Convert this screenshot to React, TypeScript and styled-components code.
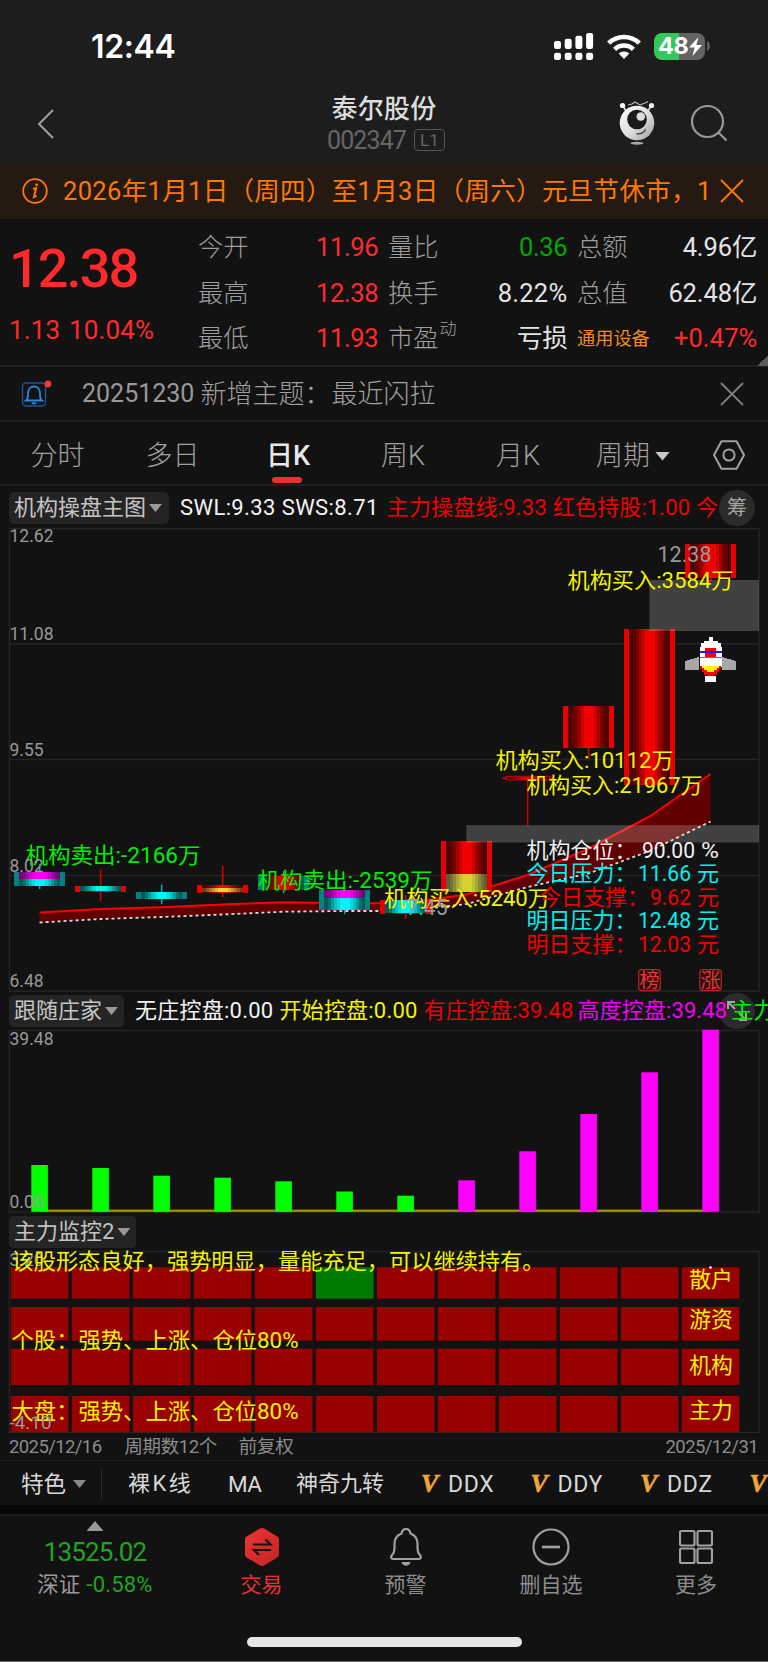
import React from "react";
import styled, { createGlobalStyle, css } from "styled-components";

const Global = createGlobalStyle`
  * { box-sizing: border-box; }
  body { margin: 0; background: #121212; }
  svg { display: block; flex: none; }
`;

const FONT = `Roboto, "Noto Sans CJK SC", sans-serif`;

const Screen = styled.div`
  width: 768px;
  height: 1662px;
  background: #121212;
  color: #999;
  font-family: ${FONT};
  overflow: hidden;
  display: flex;
  flex-direction: column;
  line-height: 1;
  border-bottom: 1px solid #6a6a6a;
`;

/* ---------- text ---------- */
type TextProps = { $size: number; $ls?: number; $color?: string; $weight?: number; $ml?: number };
const Text = styled.span<TextProps>`
  display: inline-block;
  white-space: nowrap;
  font-size: ${(p) => p.$size}px;
  letter-spacing: ${(p) => p.$ls ?? 0}px;
  color: ${(p) => p.$color ?? "#999"};
  font-weight: ${(p) => p.$weight ?? 400};
  margin-left: ${(p) => p.$ml ?? 0}px;
`;

/* ---------- top ---------- */
const TopArea = styled.header`
  height: 163px;
  flex: none;
  background: #1d1d1d;
`;
const StatusBar = styled.div`
  height: 92px;
  padding: 0 57px 0 91px;
  display: flex;
  align-items: center;
  justify-content: space-between;
`;
const Clock = styled.div`
  font: 600 32px/1 Inter, sans-serif;
  letter-spacing: -0.4px;
  padding-top: 1px;
  color: #fff;
`;
const StatusIcons = styled.div`
  display: flex;
  align-items: center;
`;
const Battery = styled.div`
  width: 51px;
  height: 27px;
  margin-left: 13px;
  border-radius: 8px;
  background: linear-gradient(90deg, #34c759 49%, #636363 49%);
  display: flex;
  align-items: center;
  padding-left: 4px;
  font: 700 23.5px/1 Inter, sans-serif;
  letter-spacing: -0.4px;
  color: #fff;
`;
const TitleBar = styled.div`
  height: 71px;
  display: grid;
  grid-template-columns: 200px 1fr 200px;
`;
const BackSlot = styled.div`
  padding: 17px 0 0 37px;
`;
const TitleStack = styled.div`
  display: flex;
  flex-direction: column;
  align-items: center;
  padding-top: 4px;
`;
const CodeRow = styled.div`
  display: flex;
  align-items: center;
  height: 24px;
  margin: 6px 0 0 4px;
`;
const LevelTag = styled.span`
  width: 31px;
  height: 22px;
  margin-left: 8px;
  border: 1.5px solid #555;
  border-radius: 4px;
  font-size: 17px;
  line-height: 20px;
  text-align: center;
  color: #666;
`;
const Actions = styled.div`
  display: flex;
  justify-content: flex-end;
  padding: 9px 39px 0 0;
  gap: 36px;
`;

const Notice = styled.div`
  height: 56px;
  flex: none;
  background: #241a11;
  display: flex;
  align-items: center;
  padding: 0 24px 1px 22px;
  justify-content: space-between;
`;
const NoticeText = styled.div`
  flex: 1;
  margin-left: 15px;
  font-size: 25.5px;
  letter-spacing: 0.33px;
  color: #ff7800;
  white-space: nowrap;
  overflow: hidden;
  line-height: 40px;
`;

/* ---------- quote ---------- */
const Quote = styled.section`
  position: relative;
  height: 148px;
  flex: none;
  border-bottom: 2px solid #1f1f1f;
  display: grid;
  grid-template-columns: 188px 190px 189px 190px;
  padding-right: 11px;
`;
const PriceCol = styled.div`
  padding: 23px 0 0 9px;
`;
const Price = styled.div`
  font-size: 54px;
  line-height: 54px;
  letter-spacing: -1.9px;
  font-weight: 500;
  color: #ff2a2a;
`;
const Change = styled.div`
  display: flex;
  gap: 9px;
  margin-top: 21px;
  font-size: 26px;
  letter-spacing: 0.1px;
  color: #ff2a2a;
`;
const StatCol = styled.div`
  padding: 6px 0 0 10px;
`;
const Stat = styled.div`
  height: 45.5px;
  display: flex;
  align-items: center;
  justify-content: space-between;
`;
const StatLabel = styled.span<{ $small?: boolean }>`
  font-size: ${(p) => (p.$small ? 18.2 : 25.3)}px;
  font-weight: ${(p) => (p.$small ? 400 : 300)};
  color: ${(p) => (p.$small ? "#f08a1c" : "#9e9e9e")};
  white-space: nowrap;
  sup {
    font-size: 17px;
    line-height: 0;
    vertical-align: 12px;
    margin-left: 1px;
  }
`;
const StatValue = styled.span<{ $c: string; $ls?: number }>`
  font-size: 25.5px;
  letter-spacing: ${(p) => p.$ls ?? -0.35}px;
  margin-right: -0.35px;
  color: ${(p) => p.$c};
`;
const Corner = styled.i`
  position: absolute;
  right: 0;
  bottom: -1px;
  width: 11px;
  height: 11px;
  background: linear-gradient(135deg, transparent 50%, #5a5a5a 50%);
`;

const ThemeRow = styled.div`
  height: 55px;
  flex: none;
  border-bottom: 2px solid #1f1f1f;
  display: flex;
  align-items: center;
  padding: 0 24px 0 21px;
`;
const Spacer = styled.i`
  flex: 1;
`;

/* ---------- tabs ---------- */
const Tabs = styled.nav`
  height: 64px;
  flex: none;
  border-bottom: 2px solid #1f1f1f;
  display: grid;
  grid-template-columns: 115px 115px 116px 114px 116px 114px 78px;
`;
const Tab = styled.div<{ $active?: boolean }>`
  display: flex;
  align-items: center;
  justify-content: center;
  position: relative;
  font-size: 27px;
  font-weight: ${(p) => (p.$active ? 500 : 300)};
  color: ${(p) => (p.$active ? "#e8e8e8" : "#a0a0a0")};
  padding-top: 6px;
  ${(p) =>
    p.$active &&
    css`
      &::after {
        content: "";
        position: absolute;
        left: 42px;
        bottom: 1px;
        width: 30px;
        height: 6px;
        border-radius: 3px;
        background: #ee2f2f;
      }
    `}
`;
const TabIcon = styled.div`
  display: flex;
  align-items: center;
  justify-content: center;
  padding-top: 3px;
`;
const Caret = styled.i<{ $w: number; $h: number; $c: string; $ml: number; $up?: boolean }>`
  flex: none;
  width: ${(p) => p.$w}px;
  height: ${(p) => p.$h}px;
  margin-left: ${(p) => p.$ml}px;
  background: ${(p) => p.$c};
  clip-path: ${(p) => (p.$up ? "polygon(50% 0, 100% 100%, 0 100%)" : "polygon(0 0, 100% 0, 50% 100%)")};
`;

/* ---------- indicator panels ---------- */
const IndicatorBar = styled.div<{ $h: number; $pt: number }>`
  position: relative;
  height: ${(p) => p.$h}px;
  flex: none;
  display: flex;
  align-items: flex-start;
  padding: ${(p) => p.$pt}px 0 0 9px;
  overflow: hidden;
`;
const Picker = styled.div<{ $w: number }>`
  width: ${(p) => p.$w}px;
  height: 32px;
  flex: none;
  border-radius: 5px;
  background: #242424;
  display: flex;
  align-items: center;
  padding-left: 5px;
  font-size: 22px;
  color: #c4c4c4;
`;
const Readout = styled.div`
  position: relative;
  z-index: 1;
  flex: none;
  display: flex;
  align-items: center;
  height: 32px;
  margin-left: 11px;
`;
const RoundButton = styled.div<{ $top: number }>`
  position: absolute;
  left: 719px;
  top: ${(p) => p.$top}px;
  width: 36px;
  height: 36px;
  border-radius: 50%;
  background: #2b2b2b;
  display: flex;
  align-items: center;
  justify-content: center;
  font-size: 20px;
  color: #a5a5a5;
`;

const DateRow = styled.div`
  height: 28px;
  flex: none;
  border-bottom: 1px solid #1d1d1d;
  display: flex;
  align-items: center;
  padding: 2px 10px 0 9px;
`;

const FeatureBar = styled.div`
  height: 44px;
  flex: none;
  display: flex;
  align-items: center;
  padding: 2px 0 0 21px;
  overflow: hidden;
`;
const Divider = styled.i`
  flex: none;
  width: 1px;
  height: 30px;
  background: #2c2c2c;
  margin: 0 26px 0 15px;
`;
const Vip = styled.span`
  font: italic 700 26px/1 "Liberation Serif", serif;
  -webkit-text-stroke: 0.6px #eea63a;
  color: #eea63a;
  width: 27px;
  flex: none;
`;
const FeatureSlot = styled.div<{ $w: number }>`
  flex: none;
  width: ${(p) => p.$w}px;
  display: flex;
  align-items: center;
`;
const Gap = styled.div`
  height: 9px;
  flex: none;
  background: #070707;
`;

const BottomNav = styled.nav`
  height: 110px;
  flex: none;
  border-top: 2px solid #1c1c1c;
  display: grid;
  grid-template-columns: 190px 143px 145px 146px 144px;
`;
const NavItem = styled.div<{ $c?: string }>`
  display: flex;
  flex-direction: column;
  align-items: center;
  padding-top: 12px;
  font-size: 21px;
  color: ${(p) => p.$c ?? "#8c8c8c"};
`;
const NavLabel = styled.span`
  margin-top: 9px;
`;
const IndexItem = styled.div`
  display: flex;
  flex-direction: column;
  align-items: center;
  padding-top: 5px;
`;
const IndexPrice = styled.div`
  margin-top: 8px;
  font-size: 26px;
  letter-spacing: -0.8px;
  color: #1fa51f;
`;
const IndexRow = styled.div`
  display: flex;
  align-items: center;
  margin-top: 9px;
`;
const HomeBar = styled.div`
  width: 275px;
  height: 10px;
  border-radius: 5px;
  background: #e6e6e6;
  margin: 13px 0 0 247px;
  flex: none;
`;

/* ---------- chart drawing ---------- */
const RED = ["#e80000", "#480000", "#5c0000", "#7d0000", "#a00000", "#c80000", "#f20000"];
const CYAN = ["#008282", "#005858", "#007474", "#009a9a", "#00c0c0", "#00dcdc", "#00f6f6"];
const MAGENTA = ["", "#780078", "#8c008c", "#aa00aa", "#c800c8", "#e600e6", "#ff00ff"];
const YELLOW = ["", "#5c5c38", "#737338", "#8c8c36", "#a8a836", "#c0c034", "#d2d232"];
const EMBER = ["", "#704020", "#8a5a20", "#a87828", "#c09a2c", "#d0b830", "#dcdc38"];
const INSETS = [0, 5, 8.5, 11.5, 14.5, 17.5, 20.5];

const Body = ({ cx, y1, y2, tones, from = 0 }: { cx: number; y1: number; y2: number; tones: string[]; from?: number }) => (
  <g shapeRendering="crispEdges">
    {tones.map((c, i) =>
      i < from ? null : (
        <rect key={i} x={cx - 25.3 + INSETS[i]} y={y1} width={50.7 - INSETS[i] * 2} height={y2 - y1} fill={c} />
      )
    )}
  </g>
);
const Wick = ({ cx, y1, y2, c }: { cx: number; y1: number; y2: number; c: string }) => (
  <rect x={cx - 0.7} y={y1} width={1.5} height={y2 - y1} fill={c} />
);
type LabelProps = { x: number; y: number; w?: number; s?: number; c?: string; children: string };
const Label = ({ x, y, w, s = 22, c = "#999", children }: LabelProps) => (
  <text x={x} y={y} fontSize={s} fill={c} fontFamily={FONT} textLength={w} lengthAdjust="spacingAndGlyphs">
    {children}
  </text>
);
const X = Array.from({ length: 12 }, (_, i) => 39.6 + i * 61);
const GRID = "#242424";
const UPPER = [912.5, 909, 907.3, 904.5, 902.3, 903.2, 903, 894.5, 875, 848.5, 816.5, 774];
const LOWER = [922.5, 919, 917, 914.5, 911.7, 911, 911, 904, 887, 873.5, 851, 821.5];
const pts = (ys: number[]) => ys.map((y, i) => `${X[i]},${y}`);

const MainChart = () => (
  <svg width="768" height="464" viewBox="0 528 768 464">
    <g stroke={GRID} fill="none" strokeWidth="1.5">
      <rect x="9.5" y="528.7" width="749.5" height="462.5" />
      <path d="M9.5 643.8H759M9.5 759.5H759M9.5 875.5H759" />
    </g>
    <Label x={9.5} y={542} w={44} s={18.5}>12.62</Label>
    <Label x={9.5} y={640} w={44} s={18.5}>11.08</Label>
    <Label x={9.5} y={755.5} w={34} s={18.5}>9.55</Label>
    <Label x={9.5} y={987} w={34} s={18.5}>6.48</Label>

    <polygon points={[...pts(UPPER), ...pts(LOWER).reverse()].join(" ")} fill="#600000" />
    <polyline points={pts(UPPER).join(" ")} fill="none" stroke="#fa0000" strokeWidth="2" />
    <polyline points={pts(LOWER).join(" ")} fill="none" stroke="#d8d8d8" strokeWidth="1.8" strokeDasharray="3 3" />

    <Wick cx={X[0]} y1={864} y2={889} c="#00b4b4" />
    <Body cx={X[0]} y1={872.4} y2={886.4} tones={CYAN} />
    <Body cx={X[0]} y1={872.4} y2={878.5} tones={MAGENTA} from={1} />

    <Wick cx={X[1]} y1={869.5} y2={901} c="#d00000" />
    <Body cx={X[1]} y1={886} y2={892.3} tones={RED} />
    <Body cx={X[1]} y1={885.5} y2={891} tones={CYAN} from={1} />

    <Wick cx={X[2]} y1={884.5} y2={904} c="#00b4b4" />
    <Body cx={X[2]} y1={891.5} y2={899.4} tones={CYAN} />

    <Wick cx={X[3]} y1={866} y2={897} c="#e80000" />
    <Body cx={X[3]} y1={884.6} y2={892.6} tones={RED} />
    <Body cx={X[3]} y1={888.4} y2={891.6} tones={EMBER} from={1} />

    <Wick cx={X[4]} y1={871} y2={893} c="#00b4b4" />
    <Body cx={X[4]} y1={876} y2={890} tones={CYAN} />
    <Body cx={X[4]} y1={876} y2={890} tones={RED} from={2} />

    <Wick cx={X[5]} y1={890} y2={914} c="#00b4b4" />
    <Body cx={X[5]} y1={890} y2={910} tones={CYAN} />
    <Body cx={X[5]} y1={890} y2={897.5} tones={MAGENTA} from={1} />

    <Wick cx={X[6]} y1={895} y2={919} c="#e80000" />
    <Body cx={X[6]} y1={899.5} y2={914} tones={RED} />
    <Body cx={X[6]} y1={899.5} y2={913} tones={CYAN} from={1} />

    <Body cx={X[7]} y1={841.2} y2={891.5} tones={RED} />
    <Body cx={X[7]} y1={873.6} y2={891.5} tones={YELLOW} from={1} />

    <Wick cx={X[8]} y1={778} y2={826} c="#d00000" />
    <Body cx={X[8]} y1={776.5} y2={780} tones={RED} from={1} />
    <rect x="506" y="776.3" width="44" height="3.6" fill="none" stroke="#d80000" strokeWidth="1" />
    <path d="M502.5 778.2h3.5M550 778.2h3" stroke="#e80000" strokeWidth="1.6" />

    <Wick cx={X[9]} y1={747} y2={759} c="#d00000" />
    <Body cx={X[9]} y1={706.4} y2={747.6} tones={RED} />
    <Body cx={X[10]} y1={629.4} y2={785} tones={RED} />
    <Wick cx={X[11]} y1={577} y2={581} c="#e80000" />
    <Body cx={X[11]} y1={544.2} y2={578} tones={RED} />

    <rect x="649.3" y="580" width="109.7" height="51" fill="#fff" fillOpacity="0.2" />
    <rect x="466.3" y="825.2" width="292.7" height="17.3" fill="#fff" fillOpacity="0.2" />

    <g shapeRendering="crispEdges">
      <path d="M685 661l14-4v12.7h-14zM736 661l-14-4v12.7h14z" fill="#a8a8a8" />
      <path d="M708.5 637h4.5v4h4.5v2h3v4h1.5v20h-22.5v-20h1.5v-4h3v-2h4.5z" fill="#fff" />
      <rect x="705" y="647.5" width="11" height="9.5" fill="#f00" />
      <path d="M700 666h21v3h-2v3h-2v3h-3v2h-7v-2h-3v-3h-2v-3h-2z" fill="#f00" />
      <path d="M702 666h17v2h-2v2h-3v2h-7v-2h-3v-2h-2z" fill="#ff0" />
      <rect x="705" y="676" width="11" height="6" fill="#fff" />
      <rect x="699.5" y="651" width="22.5" height="2" fill="#2a1af0" />
      <rect x="699.5" y="656.5" width="22.5" height="1" fill="#6060f0" />
    </g>

    <Label x={657.5} y={562} w={54}>12.38</Label>
    <Label x={567.5} y={588.2} w={166} c="#f4f400">机构买入:3584万</Label>
    <Label x={495.5} y={768} w={178} c="#f4f400">机构买入:10112万</Label>
    <Label x={526.5} y={793.3} w={176} c="#f4f400">机构买入:21967万</Label>
    <Label x={25.5} y={863} w={175} c="#00ee00">机构卖出:-2166万</Label>
    <Label x={9.5} y={871.5} w={34} s={18.5}>8.02</Label>
    <Label x={257.5} y={888.2} w={175} c="#00ee00">机构卖出:-2539万</Label>
    <Label x={384} y={906} w={166} c="#f4f400">机构买入:5240万</Label>
    <Label x={406.5} y={915} w={41}>7.45</Label>

    <Label x={526.5} y={857.5} w={110} c="#f0f0f0">机构仓位：</Label>
    <Label x={642} y={857.5} w={53} c="#f0f0f0">90.00</Label>
    <Label x={701} y={857.5} w={18} c="#f0f0f0">%</Label>
    <Label x={526.5} y={881.2} w={110} c="#00f0f0">今日压力：</Label>
    <Label x={638} y={881.2} w={53} c="#00f0f0">11.66</Label>
    <Label x={697} y={881.2} c="#00f0f0">元</Label>
    <Label x={539} y={905} w={110} c="#f00000">今日支撑：</Label>
    <Label x={650} y={905} w={41} c="#f00000">9.62</Label>
    <Label x={697} y={905} c="#f00000">元</Label>
    <Label x={526.5} y={928} w={110} c="#00f0f0">明日压力：</Label>
    <Label x={638} y={928} w={53} c="#00f0f0">12.48</Label>
    <Label x={697} y={928} c="#00f0f0">元</Label>
    <Label x={526.5} y={951.5} w={110} c="#f00000">明日支撑：</Label>
    <Label x={638} y={951.5} w={53} c="#f00000">12.03</Label>
    <Label x={697} y={951.5} c="#f00000">元</Label>

    <g fill="#2a0f0f" stroke="#a82a2a" strokeWidth="1.2">
      <rect x="638.7" y="969.6" width="21.6" height="21" rx="3" />
      <rect x="699.7" y="969.6" width="21.6" height="21" rx="3" />
    </g>
    <Label x={639.5} y={987.5} s={20} c="#e83434">榜</Label>
    <Label x={700.5} y={987.5} s={20} c="#e83434">涨</Label>
  </svg>
);

const BAR_TOPS = [1165, 1168, 1175.7, 1177.7, 1181.3, 1191.5, 1195.7, 1180.3, 1151.3, 1114, 1072.3, 1029.7];
const ControlChart = () => (
  <svg width="768" height="184" viewBox="0 1029 768 184">
    <rect x="9.5" y="1030.5" width="749.5" height="181.7" fill="none" stroke={GRID} strokeWidth="1.5" />
    <rect x="40" y="1209.6" width="670" height="2.2" fill="#a89400" />
    {BAR_TOPS.map((y, i) => (
      <rect key={i} x={X[i] - 8.3} y={y} width={16.6} height={1211.8 - y} fill={i < 7 ? "#00ff00" : "#ff00ff"} />
    ))}
    <Label x={9.5} y={1045} w={44} s={18.5}>39.48</Label>
    <Label x={9.5} y={1208} w={34} s={18.5}>0.00</Label>
  </svg>
);

const ROWS = [
  { y: 1267.3, h: 31.4, name: "散户", b: 1286.7 },
  { y: 1307, h: 33.7, name: "游资", b: 1326.7 },
  { y: 1348.7, h: 36.3, name: "机构", b: 1373 },
  { y: 1396, h: 36.3, name: "主力", b: 1418 },
];
const MonitorChart = () => (
  <svg width="768" height="183" viewBox="0 1250 768 183">
    <rect x="9.5" y="1251.5" width="749.5" height="181" fill="none" stroke={GRID} strokeWidth="1.5" />
    {ROWS.map((r, ri) =>
      X.map((x, i) => (
        <rect key={`${ri}-${i}`} x={x - 28.7} y={r.y} width={57.6} height={r.h} fill={ri === 0 && i === 5 ? "#007a00" : "#990000"} />
      ))
    )}
    <Label x={9.5} y={1265.5} w={34} s={18.5}>3.20</Label>
    {ROWS.map((r) => (
      <Label key={r.name} x={689.3} y={r.b} w={43.5} c="#f4f400">{r.name}</Label>
    ))}
    <circle cx="710.5" cy="1267.5" r="1.3" fill="#fff" />
    <Label x={11.5} y={1269.3} w={533} c="#f4f400">该股形态良好，强势明显，量能充足，可以继续持有。</Label>
    <Label x={11.5} y={1347.7} w={287} c="#f4f400">个股：强势、上涨、仓位80%</Label>
    <Label x={11.5} y={1419} w={287} c="#f4f400">大盘：强势、上涨、仓位80%</Label>
    <Label x={9.5} y={1429} w={42} s={18.5}>-4.10</Label>
  </svg>
);

/* ---------- icons ---------- */
const Signal = () => (
  <svg width="40" height="27" viewBox="0 0 40 27" fill="#fff">
    {[8, 5.7, 2.7, 0].map((y, i) => (
      <g key={i}>
        <rect x={i * 10.7} y={y} width="7" height={16 - y} rx="2.2" />
        <rect x={i * 10.7} y="19.7" width="7" height="7.3" rx="2.2" />
      </g>
    ))}
  </svg>
);
const WifiSvg = styled.svg`
  margin-left: 13px;
`;
const Wifi = () => (
  <WifiSvg width="34" height="25" viewBox="0 0 34 25" fill="none" stroke="#fff" strokeWidth="4.6">
    <path d="M1.7 9.2a22 22 0 0 1 30.6 0" />
    <path d="M7.6 15.3a13.6 13.6 0 0 1 18.8 0" />
    <path d="M17 25l-5.3-5.4a7.5 7.5 0 0 1 10.6 0z" fill="#fff" stroke="none" />
  </WifiSvg>
);
const BoltSvg = styled.svg`
  margin-left: 1px;
`;
const Cross = ({ c }: { c: string }) => (
  <svg width="24" height="24" viewBox="0 0 24 24" fill="none" stroke={c} strokeWidth="1.8">
    <path d="M1 1l22 22M23 1L1 23" />
  </svg>
);
const Robot = () => (
  <svg width="36" height="44" viewBox="0 0 36 44">
    <defs>
      <linearGradient id="shell" x1="0" y1="0" x2="1" y2="1">
        <stop offset="0" stopColor="#fff" />
        <stop offset="0.55" stopColor="#dcdcdc" />
        <stop offset="1" stopColor="#9a9a9a" />
      </linearGradient>
    </defs>
    <path d="M9 4l4-1 3-2 5 3 5-2 3-1.5" fill="none" stroke="#bbb" strokeWidth="1.1" />
    <path d="M4 5l3 5M32 5l-3 5" stroke="#ddd" strokeWidth="1.6" />
    <circle cx="3.5" cy="4.5" r="2.6" fill="#fff" />
    <circle cx="32.5" cy="4.5" r="2.6" fill="#eee" />
    <circle cx="18" cy="22" r="17.3" fill="url(#shell)" />
    <circle cx="18" cy="18.5" r="9.8" fill="#1a1a1a" />
    <circle cx="21.8" cy="15.5" r="4.3" fill="#ddd" />
    <path d="M17.5 32.5c3.5 1 7.5-.5 9-4" fill="none" stroke="#333" strokeWidth="1.3" />
    <ellipse cx="18" cy="42.3" rx="6.5" ry="1.5" fill="#aaa" />
  </svg>
);
const HexSettings = () => (
  <svg width="32" height="30" viewBox="0 0 32 30" fill="none" stroke="#a0a0a0" strokeWidth="2">
    <path d="M8.5 1.2h15L31 15l-7.5 13.8h-15L1 15z" strokeLinejoin="round" />
    <circle cx="16" cy="15" r="5.6" />
  </svg>
);

const App = () => (
  <Screen>
    <Global />
    <TopArea>
      <StatusBar>
        <Clock>12:44</Clock>
        <StatusIcons>
          <Signal />
          <Wifi />
          <Battery>
            48
            <BoltSvg width="13" height="19" viewBox="0 0 13 19" fill="#fff">
              <path d="M9.5 0L0 10.5h5.6L3.5 19 13 8H7.3z" />
            </BoltSvg>
          </Battery>
          <svg width="6" height="10" viewBox="0 0 6 10">
            <path d="M2 0c4 1.5 4 8.5 0 10z" fill="#5c5c5c" />
          </svg>
        </StatusIcons>
      </StatusBar>
      <TitleBar>
        <BackSlot>
          <svg width="18" height="30" viewBox="0 0 18 30" fill="none" stroke="#a0a0a0" strokeWidth="2">
            <path d="M16 1L2 15l14 14" />
          </svg>
        </BackSlot>
        <TitleStack>
          <Text $size={26} $ls={0.3} $weight={500} $color="#dcdcdc">泰尔股份</Text>
          <CodeRow>
            <Text $size={25} $ls={-0.9} $color="#666">002347</Text>
            <LevelTag>L1</LevelTag>
          </CodeRow>
        </TitleStack>
        <Actions>
          <Robot />
          <svg width="38" height="40" viewBox="0 0 38 40" fill="none" stroke="#999" strokeWidth="2.2">
            <circle cx="16.5" cy="20.5" r="15.5" />
            <path d="M27.5 31.5l8 8" />
          </svg>
        </Actions>
      </TitleBar>
    </TopArea>

    <Notice>
      <svg width="26" height="26" viewBox="0 0 26 26" fill="none" stroke="#ff7800" strokeWidth="1.8">
        <circle cx="13" cy="13" r="11.8" />
        <path d="M11 10.8l3-.6-2 8.8 2.6-1.2" strokeWidth="2" />
        <circle cx="14.6" cy="6.8" r="1" fill="#ff7800" strokeWidth="1" />
      </svg>
      <NoticeText>2026年1月1日（周四）至1月3日（周六）元旦节休市，1</NoticeText>
      <Cross c="#ff7800" />
    </Notice>

    <Quote>
      <PriceCol>
        <Price>12.38</Price>
        <Change>
          <span>1.13</span>
          <span>10.04%</span>
        </Change>
      </PriceCol>
      <StatCol>
        <Stat><StatLabel>今开</StatLabel><StatValue $c="#ff2a2a">11.96</StatValue></Stat>
        <Stat><StatLabel>最高</StatLabel><StatValue $c="#ff2a2a">12.38</StatValue></Stat>
        <Stat><StatLabel>最低</StatLabel><StatValue $c="#ff2a2a">11.93</StatValue></Stat>
      </StatCol>
      <StatCol>
        <Stat><StatLabel>量比</StatLabel><StatValue $c="#00aa00">0.36</StatValue></Stat>
        <Stat><StatLabel>换手</StatLabel><StatValue $c="#e4e4e4" $ls={0.25}>8.22%</StatValue></Stat>
        <Stat><StatLabel>市盈<sup>动</sup></StatLabel><StatValue $c="#e4e4e4">亏损</StatValue></Stat>
      </StatCol>
      <StatCol>
        <Stat><StatLabel>总额</StatLabel><StatValue $c="#e4e4e4" $ls={-0.1}>4.96亿</StatValue></Stat>
        <Stat><StatLabel>总值</StatLabel><StatValue $c="#e4e4e4" $ls={-0.1}>62.48亿</StatValue></Stat>
        <Stat><StatLabel $small>通用设备</StatLabel><StatValue $c="#ff2a2a" $ls={0.1}>+0.47%</StatValue></Stat>
      </StatCol>
      <Corner />
    </Quote>

    <ThemeRow>
      <svg width="32" height="30" viewBox="0 0 32 30" fill="none">
        <rect x="1.5" y="4" width="23" height="23" rx="3.5" stroke="#1d5490" strokeWidth="1.4" />
        <path d="M5 21.5h16c-2-1.5-2-3-2-7.5 0-4-2.5-6.5-6-6.5s-6 2.5-6 6.5c0 4.500 0 6-2 7.5zM11 23.5c.8 1.3 3.2 1.3 4 0" stroke="#2a86e0" strokeWidth="1.8" />
        <circle cx="27" cy="5" r="3.4" fill="#f03a3a" />
      </svg>
      <Text $size={25} $ml={29}>20251230</Text>
      <Text $size={26} $weight={300} $ml={6} $color="#a0a0a0">新增主题：</Text>
      <Text $size={26} $weight={300} $ml={1} $color="#a0a0a0">最近闪拉</Text>
      <Spacer />
      <Cross c="#808080" />
    </ThemeRow>

    <Tabs>
      <Tab>分时</Tab>
      <Tab>多日</Tab>
      <Tab $active>日K</Tab>
      <Tab>周K</Tab>
      <Tab>月K</Tab>
      <Tab>周期<Caret $w={15} $h={9} $c="#c8c8c8" $ml={5} /></Tab>
      <TabIcon><HexSettings /></TabIcon>
    </Tabs>

    <IndicatorBar $h={42} $pt={6}>
      <Picker $w={160}>机构操盘主图<Caret $w={13} $h={8} $c="#999" $ml={3} /></Picker>
      <Readout>
        <Text $size={22} $ls={0.4} $color="#f4f4f4">SWL:9.33 SWS:8.71</Text>
        <Text $size={22} $ls={0.2} $color="#f00000" $ml={8}>主力操盘线:9.33</Text>
        <Text $size={22} $ls={0.1} $color="#f00000" $ml={6}>红色持股:1.00</Text>
        <Text $size={22} $color="#f00000" $ml={6}>今</Text>
      </Readout>
      <RoundButton $top={4}>筹</RoundButton>
    </IndicatorBar>
    <MainChart />

    <IndicatorBar $h={37} $pt={3}>
      <Picker $w={115}>跟随庄家<Caret $w={13} $h={8} $c="#999" $ml={3} /></Picker>
      <Readout>
        <Text $size={22} $ls={0.25} $color="#f4f4f4">无庄控盘:0.00</Text>
        <Text $size={22} $ls={0.2} $color="#f4f400" $ml={6}>开始控盘:0.00</Text>
        <Text $size={22} $ls={0.15} $color="#f00000" $ml={6}>有庄控盘:39.48</Text>
        <Text $size={22} $ls={0.1} $color="#f400f4" $ml={4}>高度控盘:39.48</Text>
        <Text $size={22} $color="#00ee00" $ml={4}>主力</Text>
      </Readout>
      <RoundButton $top={1}>
        <svg width="20" height="20" viewBox="0 0 20 20" fill="none" stroke="#a5a5a5" strokeWidth="2">
          <path d="M1 8V1h7M1 1l7 7M19 12v7h-7M19 19l-7-7" />
        </svg>
      </RoundButton>
    </IndicatorBar>
    <ControlChart />

    <IndicatorBar $h={37} $pt={3}>
      <Picker $w={127}>主力监控2<Caret $w={13} $h={8} $c="#999" $ml={3} /></Picker>
    </IndicatorBar>
    <MonitorChart />

    <DateRow>
      <Text $size={18.5} $ls={-0.6} $color="#8c8c8c">2025/12/16</Text>
      <Text $size={18.5} $ls={-0.4} $color="#8c8c8c" $ml={23}>周期数12个</Text>
      <Text $size={18.5} $ls={-0.3} $color="#8c8c8c" $ml={22}>前复权</Text>
      <Spacer />
      <Text $size={18.5} $ls={-0.6} $color="#8c8c8c">2025/12/31</Text>
    </DateRow>

    <FeatureBar>
      <Text $size={22.5} $color="#d8d8d8">特色</Text>
      <Caret $w={13} $h={8} $c="#888" $ml={7} />
      <Divider />
      <FeatureSlot $w={100}><Text $size={22} $ls={2.5} $color="#d8d8d8">裸K线</Text></FeatureSlot>
      <FeatureSlot $w={68}><Text $size={22.5} $ls={-0.5} $color="#d8d8d8">MA</Text></FeatureSlot>
      <FeatureSlot $w={125}><Text $size={22} $color="#d8d8d8">神奇九转</Text></FeatureSlot>
      <FeatureSlot $w={109.5}><Vip>V</Vip><Text $size={23} $ls={0.6} $color="#d8d8d8">DDX</Text></FeatureSlot>
      <FeatureSlot $w={109.5}><Vip>V</Vip><Text $size={23} $ls={0.6} $color="#d8d8d8">DDY</Text></FeatureSlot>
      <FeatureSlot $w={109.5}><Vip>V</Vip><Text $size={23} $ls={0.6} $color="#d8d8d8">DDZ</Text></FeatureSlot>
      <Vip>V</Vip>
    </FeatureBar>
    <Gap />

    <BottomNav>
      <IndexItem>
        <Caret $w={17} $h={10} $c="#999" $ml={0} $up />
        <IndexPrice>13525.02</IndexPrice>
        <IndexRow>
          <Text $size={21.5}>深证</Text>
          <Text $size={22} $ls={0.2} $ml={6} $color="#1fa51f">-0.58%</Text>
        </IndexRow>
      </IndexItem>
      <NavItem $c="#e83232">
        <svg width="34" height="38" viewBox="0 0 34 38">
          <defs>
            <linearGradient id="trade" x1="0" y1="0" x2="1" y2="1">
              <stop offset="0" stopColor="#f03434" />
              <stop offset="1" stopColor="#c02424" />
            </linearGradient>
          </defs>
          <path d="M15 .6q2-1 4 0l13 7.6q2 1 2 3.2v15.2q0 2.2-2 3.2l-13 7.6q-2 1-4 0L2 29.8q-2-1-2-3.2V11.4q0-2.200 2-3.2z" fill="url(#trade)" />
          <path d="M8 16.5h17.5l-5-5M26 22H9l5 5" fill="none" stroke="#161212" strokeWidth="2.2" />
        </svg>
        <NavLabel>交易</NavLabel>
      </NavItem>
      <NavItem>
        <svg width="32" height="38" viewBox="0 0 32 38" fill="none" stroke="#a0a0a0" strokeWidth="2.2">
          <path d="M3 31h26c2 0 2.5-2.5 1-4-2-1.8-2.5-3-2.5-7v-4c0-5-3-9-7-10.5C20 3 18.5 1 16 1s-4 2-4.5 4.5c-4 1.5-7 5.5-7 10.5v4c0 4-.5 5.2-2.5 7-1.5 1.5-1 4 1 4z" />
          <path d="M11.5 34h9c-1 5-8 5-9 0z" fill="#a0a0a0" stroke="none" />
        </svg>
        <NavLabel>预警</NavLabel>
      </NavItem>
      <NavItem>
        <svg width="38" height="38" viewBox="0 0 38 38" fill="none" stroke="#a0a0a0" strokeWidth="2.2">
          <circle cx="19" cy="19" r="17.5" />
          <path d="M10 19h18" strokeWidth="2.6" />
        </svg>
        <NavLabel>删自选</NavLabel>
      </NavItem>
      <NavItem>
        <svg width="34" height="38" viewBox="0 0 34 38" fill="none" stroke="#a0a0a0" strokeWidth="2.2">
          <rect x="1" y="3" width="14.5" height="14.5" rx="1.5" />
          <rect x="18.5" y="3" width="14.5" height="14.5" rx="1.5" />
          <rect x="1" y="20.5" width="14.5" height="14.5" rx="1.5" />
          <rect x="18.5" y="20.5" width="14.5" height="14.5" rx="1.5" />
        </svg>
        <NavLabel>更多</NavLabel>
      </NavItem>
    </BottomNav>
    <HomeBar />
  </Screen>
);

export default App;
